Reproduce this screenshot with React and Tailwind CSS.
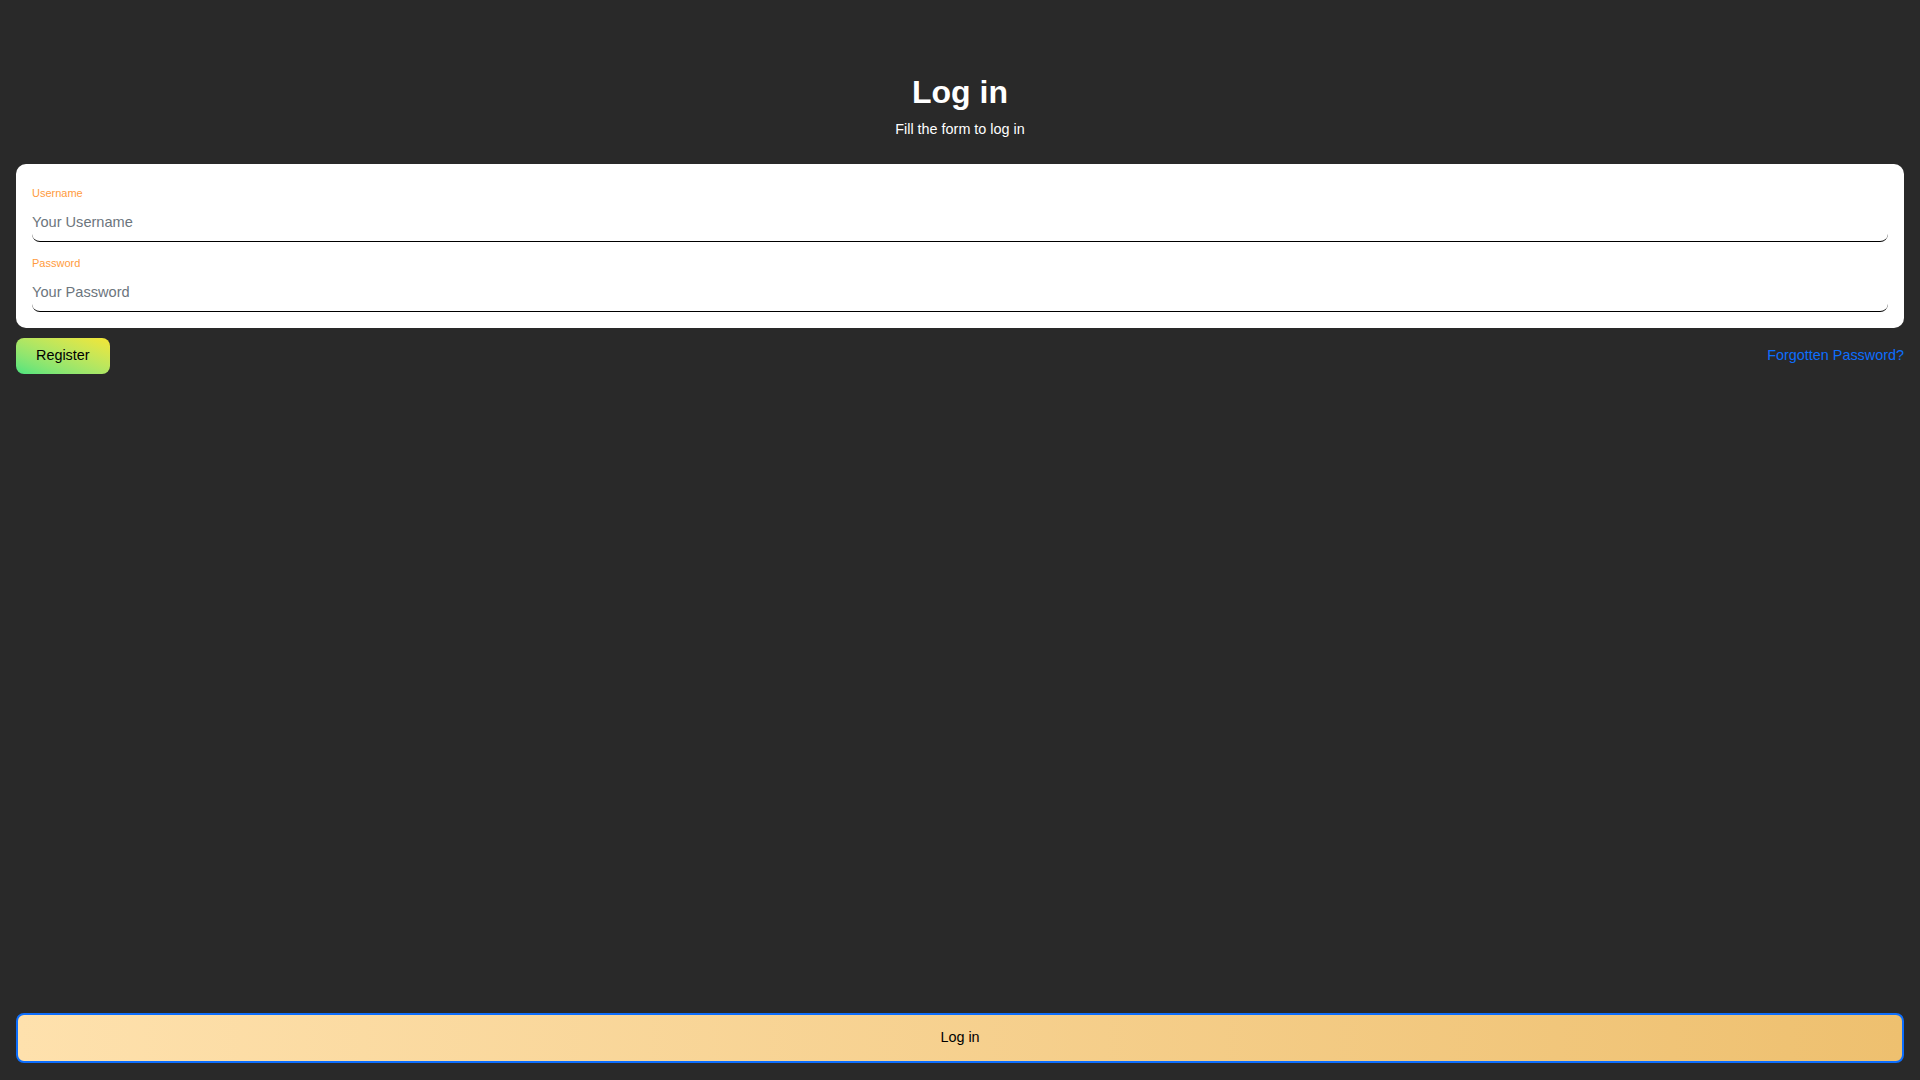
import React from 'react';

const LabeledInput = ({ label, placeholder, type = 'text' }) => (
  <div className="flex flex-col">
    <label className="text-[11px] leading-4 text-[#ff9b3d]">{label}</label>
    <input
      type={type}
      placeholder={placeholder}
      className="h-[41px] w-full rounded-lg border-b-[1.5px] border-black bg-white pt-0.5 text-[14.6px] text-black outline-none placeholder:text-[#6c757d]"
    />
  </div>
);

const App = () => {
  return (
    <div
      className="flex min-h-screen flex-col bg-[#292929] px-4 pb-[17px] text-white"
      style={{ fontFamily: '"Liberation Sans", Arial, sans-serif' }}
    >
      <header className="flex flex-col items-center pt-[73px]">
        <h1 className="text-[32px] font-bold leading-[38px]">Log in</h1>
        <p className="mt-[7px] text-[14.4px] leading-[22px]">Fill the form to log in</p>
      </header>

      <form className="mt-6 flex flex-col gap-[13px] rounded-[10px] bg-white px-4 pb-4 pt-[21px]">
        <LabeledInput label="Username" placeholder="Your Username" />
        <LabeledInput label="Password" placeholder="Your Password" type="password" />
      </form>

      <div className="mt-[10px] flex items-center justify-between">
        <button className="h-[36px] rounded-lg bg-gradient-to-tr from-[#48e47f] to-[#f4e632] px-5 text-[14.4px] text-black">
          Register
        </button>
        <a href="#" className="text-[14.4px] text-[#0d6efd]">
          Forgotten Password?
        </a>
      </div>

      <div className="flex-1" />

      <button className="h-[50px] w-full rounded-lg border-2 border-[#0d6efd] bg-gradient-to-r from-[#fee1ad] to-[#eec06f] text-[14.4px] text-black">
        Log in
      </button>
    </div>
  );
};

export default App;
